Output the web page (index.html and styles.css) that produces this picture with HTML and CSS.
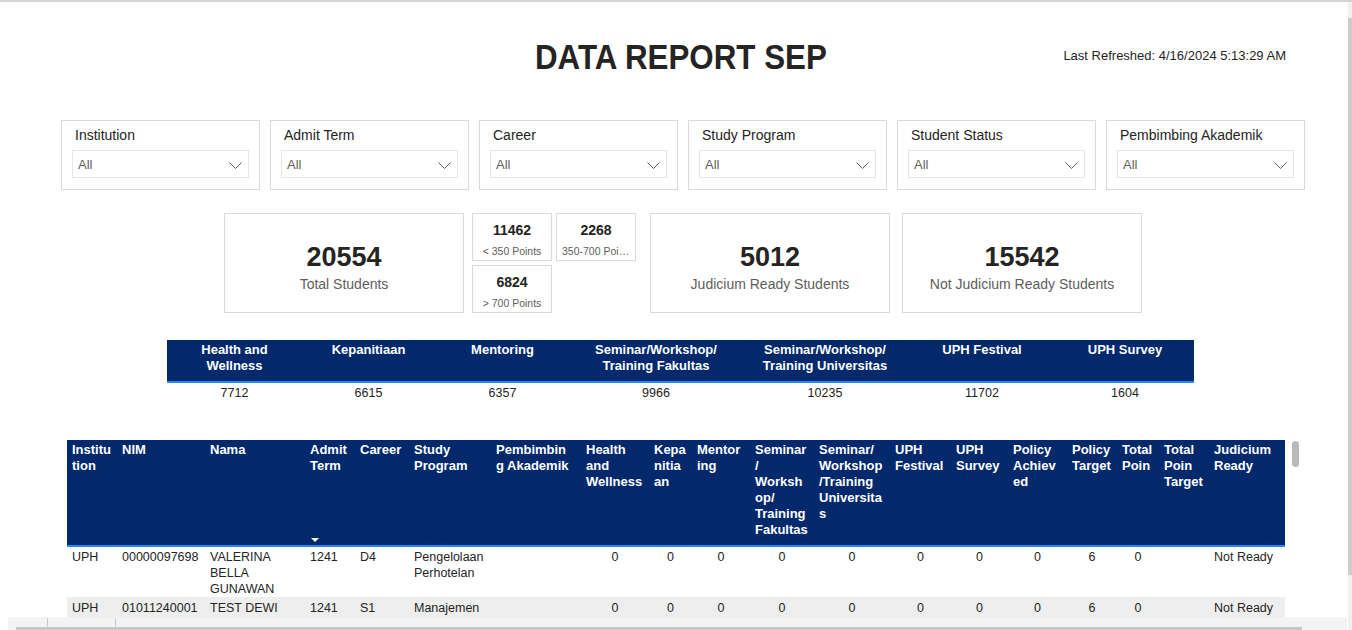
FILE: index.html
```html
<!DOCTYPE html>
<html lang="en">
<head>
<meta charset="utf-8">
<title>Data Report SEP</title>
<link rel="stylesheet" href="styles.css">
</head>
<body>
<div class="page">
  <div class="frame">
    <header class="header">
      <h1 class="title">DATA REPORT SEP</h1>
      <div class="refreshed">Last Refreshed: 4/16/2024 5:13:29 AM</div>
    </header>

    <section class="slicers">
      <div class="slicer">
        <div class="slicer-title">Institution</div>
        <div class="dropdown"><span>All</span><svg class="chev" viewBox="0 0 13 7"><polyline points="0.5,0.5 6.5,6.5 12.5,0.5"/></svg></div>
      </div>
      <div class="slicer">
        <div class="slicer-title">Admit Term</div>
        <div class="dropdown"><span>All</span><svg class="chev" viewBox="0 0 13 7"><polyline points="0.5,0.5 6.5,6.5 12.5,0.5"/></svg></div>
      </div>
      <div class="slicer">
        <div class="slicer-title">Career</div>
        <div class="dropdown"><span>All</span><svg class="chev" viewBox="0 0 13 7"><polyline points="0.5,0.5 6.5,6.5 12.5,0.5"/></svg></div>
      </div>
      <div class="slicer">
        <div class="slicer-title">Study Program</div>
        <div class="dropdown"><span>All</span><svg class="chev" viewBox="0 0 13 7"><polyline points="0.5,0.5 6.5,6.5 12.5,0.5"/></svg></div>
      </div>
      <div class="slicer">
        <div class="slicer-title">Student Status</div>
        <div class="dropdown"><span>All</span><svg class="chev" viewBox="0 0 13 7"><polyline points="0.5,0.5 6.5,6.5 12.5,0.5"/></svg></div>
      </div>
      <div class="slicer">
        <div class="slicer-title">Pembimbing Akademik</div>
        <div class="dropdown"><span>All</span><svg class="chev" viewBox="0 0 13 7"><polyline points="0.5,0.5 6.5,6.5 12.5,0.5"/></svg></div>
      </div>
    </section>

    <section class="kpis">
      <div class="card big">
        <div class="big-num">20554</div>
        <div class="big-label">Total Students</div>
      </div>
      <div class="mini-grid">
        <div class="card mini">
          <div class="mini-num">11462</div>
          <div class="mini-label">&lt; 350 Points</div>
        </div>
        <div class="card mini">
          <div class="mini-num">2268</div>
          <div class="mini-label">350-700 Points</div>
        </div>
        <div class="card mini">
          <div class="mini-num">6824</div>
          <div class="mini-label">&gt; 700 Points</div>
        </div>
      </div>
      <div class="card big judicium">
        <div class="big-num">5012</div>
        <div class="big-label">Judicium Ready Students</div>
      </div>
      <div class="card big not-judicium">
        <div class="big-num">15542</div>
        <div class="big-label">Not Judicium Ready Students</div>
      </div>
    </section>

    <table class="summary">
      <colgroup>
        <col class="s1"><col class="s2"><col class="s3"><col class="s4"><col class="s5"><col class="s6"><col class="s7">
      </colgroup>
      <thead>
        <tr>
          <th>Health and<br>Wellness</th>
          <th>Kepanitiaan</th>
          <th>Mentoring</th>
          <th>Seminar/Workshop/<br>Training Fakultas</th>
          <th>Seminar/Workshop/<br>Training Universitas</th>
          <th>UPH Festival</th>
          <th>UPH Survey</th>
        </tr>
      </thead>
      <tbody>
        <tr>
          <td>7712</td><td>6615</td><td>6357</td><td>9966</td><td>10235</td><td>11702</td><td>1604</td>
        </tr>
      </tbody>
    </table>

    <div class="grid-wrap">
      <table class="grid">
        <colgroup>
          <col class="c1"><col class="c2"><col class="c3"><col class="c4"><col class="c5"><col class="c6"><col class="c7"><col class="c8"><col class="c9"><col class="c10"><col class="c11"><col class="c12"><col class="c13"><col class="c14"><col class="c15"><col class="c16"><col class="c17"><col class="c18"><col class="c19">
        </colgroup>
        <thead>
          <tr>
            <th><div class="th-in">Institu<br>tion</div></th>
            <th><div class="th-in">NIM</div></th>
            <th><div class="th-in">Nama</div></th>
            <th><div class="th-in">Admit<br>Term<span class="sort"></span></div></th>
            <th><div class="th-in">Career</div></th>
            <th><div class="th-in">Study<br>Program</div></th>
            <th><div class="th-in">Pembimbin<br>g Akademik</div></th>
            <th><div class="th-in">Health<br>and<br>Wellness</div></th>
            <th><div class="th-in">Kepa<br>nitia<br>an</div></th>
            <th><div class="th-in">Mentor<br>ing</div></th>
            <th><div class="th-in">Seminar<br>/<br>Worksh<br>op/<br>Training<br>Fakultas</div></th>
            <th><div class="th-in">Seminar/<br>Workshop<br>/Training<br>Universita<br>s</div></th>
            <th><div class="th-in">UPH<br>Festival</div></th>
            <th><div class="th-in">UPH<br>Survey</div></th>
            <th><div class="th-in">Policy<br>Achiev<br>ed</div></th>
            <th><div class="th-in">Policy<br>Target</div></th>
            <th><div class="th-in">Total<br>Poin</div></th>
            <th><div class="th-in">Total<br>Poin<br>Target</div></th>
            <th><div class="th-in">Judicium<br>Ready</div></th>
          </tr>
        </thead>
        <tbody>
          <tr class="first">
            <td>UPH</td>
            <td>00000097698</td>
            <td>VALERINA<br>BELLA<br>GUNAWAN</td>
            <td>1241</td>
            <td>D4</td>
            <td>Pengelolaan<br>Perhotelan</td>
            <td></td>
            <td class="num">0</td>
            <td class="num">0</td>
            <td class="num">0</td>
            <td class="num">0</td>
            <td class="num">0</td>
            <td class="num">0</td>
            <td class="num">0</td>
            <td class="num">0</td>
            <td class="num">6</td>
            <td class="num">0</td>
            <td></td>
            <td>Not Ready</td>
          </tr>
          <tr class="alt">
            <td>UPH</td>
            <td>01011240001</td>
            <td>TEST DEWI</td>
            <td>1241</td>
            <td>S1</td>
            <td>Manajemen</td>
            <td></td>
            <td class="num">0</td>
            <td class="num">0</td>
            <td class="num">0</td>
            <td class="num">0</td>
            <td class="num">0</td>
            <td class="num">0</td>
            <td class="num">0</td>
            <td class="num">0</td>
            <td class="num">6</td>
            <td class="num">0</td>
            <td></td>
            <td>Not Ready</td>
          </tr>
        </tbody>
      </table>
      <div class="vthumb"></div>
    </div>

    <div class="hscroll"><div class="hthumb"></div></div>
  </div>
  <div class="vscroll"><div class="vscroll-thumb"></div></div>
</div>
</body>
</html>
```

FILE: styles.css
```css
* { box-sizing: border-box; }

html, body {
  margin: 0;
  padding: 0;
  background: #ffffff;
}

body {
  font-family: "Liberation Sans", Arial, sans-serif;
  color: #252423;
}

.page {
  position: relative;
  width: 1352px;
  height: 630px;
  overflow: hidden;
}

.frame {
  border-top: 2px solid #d6d6d6;
  height: 630px;
}

/* Header */
.header {
  display: flex;
  align-items: flex-start;
  height: 118px;
  padding: 35px 66px 0 535px;
}

.title {
  margin: 0;
  font-size: 35px;
  font-weight: 700;
  line-height: 40px;
  color: #252423;
  white-space: nowrap;
  transform: scaleX(0.895);
  transform-origin: left center;
  width: 298px;
}

.refreshed {
  margin-left: auto;
  margin-top: 11px;
  font-size: 13px;
  line-height: 15px;
  color: #252423;
  white-space: nowrap;
}

/* Slicers */
.slicers {
  display: flex;
  gap: 10px;
  padding-left: 61px;
}

.slicer {
  width: 199px;
  height: 70px;
  border: 1px solid #dadada;
  padding: 6px 10px 0;
}

.slicer-title {
  font-size: 14px;
  line-height: 16px;
  padding-left: 3px;
  color: #252423;
  white-space: nowrap;
}

.dropdown {
  margin-top: 7px;
  height: 28px;
  border: 1px solid #e6e6e6;
  display: flex;
  align-items: center;
  justify-content: space-between;
  padding: 0 6px 0 5px;
}

.dropdown span {
  font-size: 13px;
  line-height: 15px;
  color: #605e5c;
}

.chev {
  width: 13px;
  height: 7px;
  margin-top: 3px;
  fill: none;
  stroke: #605e5c;
  stroke-width: 1;
}

/* KPI cards */
.kpis {
  display: flex;
  margin-top: 23px;
  padding-left: 224px;
  height: 100px;
}

.card {
  border: 1px solid #dadada;
  background: #ffffff;
}

.big {
  width: 240px;
  height: 100px;
  padding-top: 28px;
  text-align: center;
}

.big-num {
  font-size: 27px;
  font-weight: 700;
  line-height: 30px;
  color: #252423;
}

.big-label {
  font-size: 14px;
  line-height: 18px;
  margin-top: 3px;
  color: #605e5c;
  white-space: nowrap;
}

.mini-grid {
  margin-left: 8px;
  width: 164px;
  display: grid;
  grid-template-columns: 80px 80px;
  grid-template-rows: 48px 48px;
  gap: 4px;
}

.mini {
  padding: 8px 5px 0;
  text-align: center;
  overflow: hidden;
}

.mini-num {
  font-size: 14px;
  font-weight: 700;
  line-height: 17px;
  color: #252423;
}

.mini-label {
  font-size: 10.5px;
  line-height: 13px;
  margin-top: 6px;
  color: #605e5c;
  white-space: nowrap;
  overflow: hidden;
  text-overflow: ellipsis;
}

.judicium { margin-left: 14px; }
.not-judicium { margin-left: 12px; }

/* Summary table */
.summary {
  margin: 27px 0 0 167px;
  width: 1027px;
  table-layout: fixed;
  border-collapse: separate;
  border-spacing: 0;
}

.summary .s1 { width: 135px; }
.summary .s2 { width: 133px; }
.summary .s3 { width: 135px; }
.summary .s4 { width: 172px; }
.summary .s5 { width: 166px; }
.summary .s6 { width: 148px; }
.summary .s7 { width: 138px; }

.summary th {
  background: #01296b;
  color: #ffffff;
  font-size: 13px;
  font-weight: 700;
  line-height: 16px;
  padding: 2px 2px 7px;
  vertical-align: top;
  text-align: center;
  white-space: nowrap;
  border-bottom: 2px solid #1a8cff;
}

.summary td {
  font-size: 12.5px;
  line-height: 16px;
  padding: 2px 2px;
  text-align: center;
  color: #252423;
}

/* Detail grid */
.grid-wrap {
  position: relative;
  margin: 37px 0 0 67px;
  width: 1281px;
  height: 177px;
}

.grid {
  width: 1218px;
  table-layout: fixed;
  border-collapse: separate;
  border-spacing: 0;
}

.grid .c1 { width: 50px; }
.grid .c2 { width: 88px; }
.grid .c3 { width: 100px; }
.grid .c4 { width: 50px; }
.grid .c5 { width: 54px; }
.grid .c6 { width: 82px; }
.grid .c7 { width: 90px; }
.grid .c8 { width: 68px; }
.grid .c9 { width: 43px; }
.grid .c10 { width: 58px; }
.grid .c11 { width: 64px; }
.grid .c12 { width: 76px; }
.grid .c13 { width: 61px; }
.grid .c14 { width: 57px; }
.grid .c15 { width: 59px; }
.grid .c16 { width: 50px; }
.grid .c17 { width: 42px; }
.grid .c18 { width: 50px; }
.grid .c19 { width: 76px; }

.grid th {
  background: #01296b;
  color: #ffffff;
  font-size: 13px;
  font-weight: 700;
  line-height: 16px;
  padding: 2px 5px 3px;
  text-align: left;
  vertical-align: top;
  white-space: nowrap;
  border-bottom: 2px solid #1a8cff;
}

.th-in {
  position: relative;
  height: 100px;
}

.sort {
  position: absolute;
  left: 1px;
  top: 96px;
  width: 0;
  height: 0;
  border-left: 4px solid transparent;
  border-right: 4px solid transparent;
  border-top: 4px solid #ffffff;
}

.grid td {
  font-size: 12.5px;
  line-height: 16px;
  padding: 2px 5px 0;
  vertical-align: top;
  white-space: nowrap;
  color: #252423;
}

.grid tr.alt td {
  background: #eeeeee;
  padding: 3px 5px 1px;
}

.grid td.num { text-align: center; }

.vthumb {
  position: absolute;
  left: 1225px;
  top: 1px;
  width: 7px;
  height: 26px;
  border-radius: 4px;
  background: #b9b9b9;
}

/* Bottom horizontal scroll strip */
.hscroll {
  position: relative;
  margin-left: 8px;
  width: 1339px;
  height: 13px;
  background: #f3f3f3;
}

.hscroll::before,
.hscroll::after {
  content: "";
  position: absolute;
  top: 1px;
  width: 1px;
  height: 9px;
  background: #c8c8c8;
}

.hscroll::before { left: 39px; }
.hscroll::after { left: 107px; }

.hthumb {
  position: absolute;
  left: 8px;
  bottom: 0;
  width: 1286px;
  height: 3px;
  background: #c8c8c8;
}

/* Page vertical scrollbar */
.vscroll {
  position: absolute;
  right: 0;
  top: 2px;
  width: 4px;
  height: 628px;
  background: #f0f0f0;
}

.vscroll-thumb {
  margin-top: 16px;
  height: 557px;
  background: #cdcdcd;
}
```
